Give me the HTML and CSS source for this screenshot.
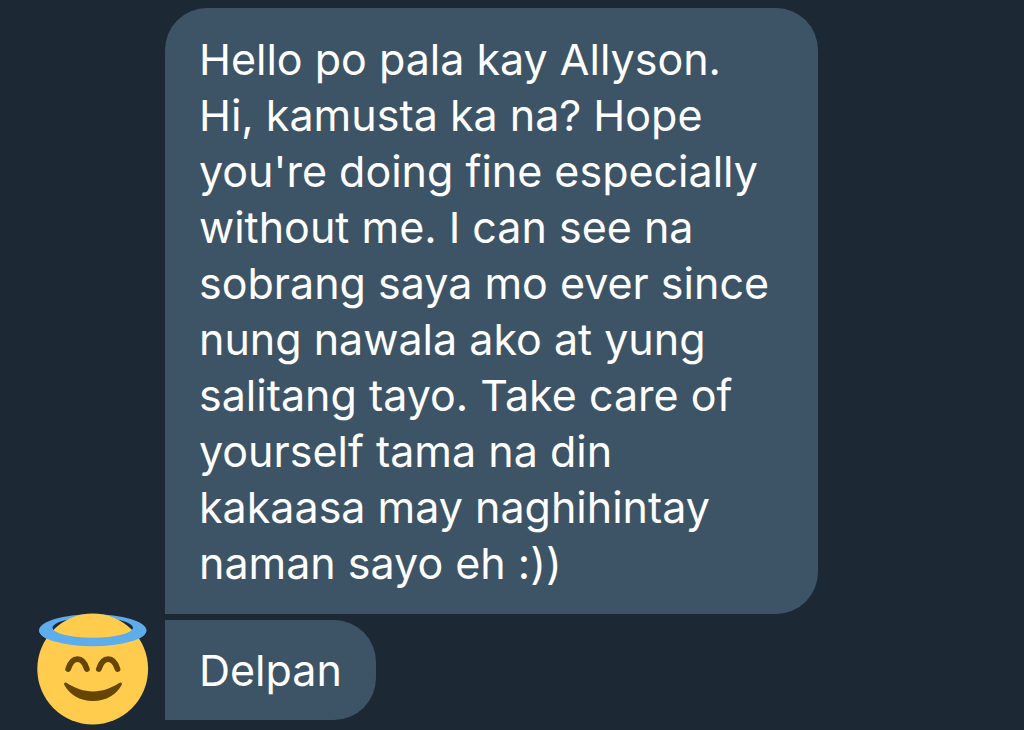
FILE: index.html
```html
<!DOCTYPE html>
<html lang="tl">
<head>
    <meta charset="UTF-8">
    <meta name="viewport" content="width=device-width, initial-scale=1.0">
    <title>Messages</title>
    <link rel="stylesheet" href="styles.css">
</head>
<body>
    <main class="thread">
        <svg class="avatar" viewBox="0 0 112 112" role="img" aria-label="Smiling face with halo">
            <!-- back of the halo, face, then front of the halo -->
            <path fill="#5dadec" fill-rule="evenodd" d="M2 17.3a53.7 16 0 0 1 107.4 0a53.7 16 0 0 1-107.4 0zM15.3 15a40.4 10.5 0 0 0 80.8 0a40.4 10.5 0 0 0-80.8 0z"/>
            <circle cx="55.7" cy="56" r="55.4" fill="#ffcc4d"/>
            <path fill="#5dadec" d="M2 17.3a53.7 16 0 0 0 107.4 0l-13.3-2.6a40.4 10 0 0 1-80.8 0z"/>
            <path fill="none" stroke="#664500" stroke-width="5.8" stroke-linecap="round" d="M31.2 56c2-6.400 5.300-9.800 9.300-9.800s7.300 3.400 9.300 9.800M61.900 56c2-6.400 5.300-9.800 9.300-9.800s7.300 3.400 9.300 9.800"/>
            <path fill="#664500" d="M27.500 70c.8-.7 1.600-.3 2.400.1C38 75.500 47 78.500 56 78.500s18-3 26.100-8.400c.8-.4 1.600-.8 2.400-.1.700.7.400 1.500 0 2.300C79.500 81.500 69.500 88 56 88S32.500 81.500 27.500 72.300c-.4-.8-.7-1.600 0-2.300z"/>
        </svg>
        <div class="messages">
            <p class="bubble bubble-first">Hello po pala kay Allyson. Hi, kamusta ka na? Hope you're doing fine especially without me. I can see na sobrang saya mo ever since nung nawala ako at yung salitang tayo. Take care of yourself tama na din kakaasa may naghihintay naman sayo eh :))</p>
            <p class="bubble bubble-last">Delpan</p>
        </div>
    </main>
</body>
</html>
```

FILE: styles.css
```css
body {
    margin: 0;
    background-color: #1c2935;
    color: #fff;
    font-family: Inter, "Liberation Sans", sans-serif;
}
.thread {
    display: flex;
    align-items: flex-end;
    gap: 16px;
    padding: 8px 37px 4px;
}
.avatar {
    flex: none;
    width: 112px;
    height: 112px;
}
.messages {
    display: flex;
    flex-direction: column;
    align-items: flex-start;
    gap: 6px;
    padding-bottom: 5px;
}
.bubble {
    box-sizing: border-box;
    max-width: 653px;
    margin: 0;
    padding: 23px 34px;
    background-color: #3d5466;
    font-size: 43px;
    line-height: 56px;
}
.bubble-first {
    border-radius: 42px 42px 42px 0;
}
.bubble-last {
    padding: 22px 34px;
    border-radius: 0 42px 42px 0;
}
```
